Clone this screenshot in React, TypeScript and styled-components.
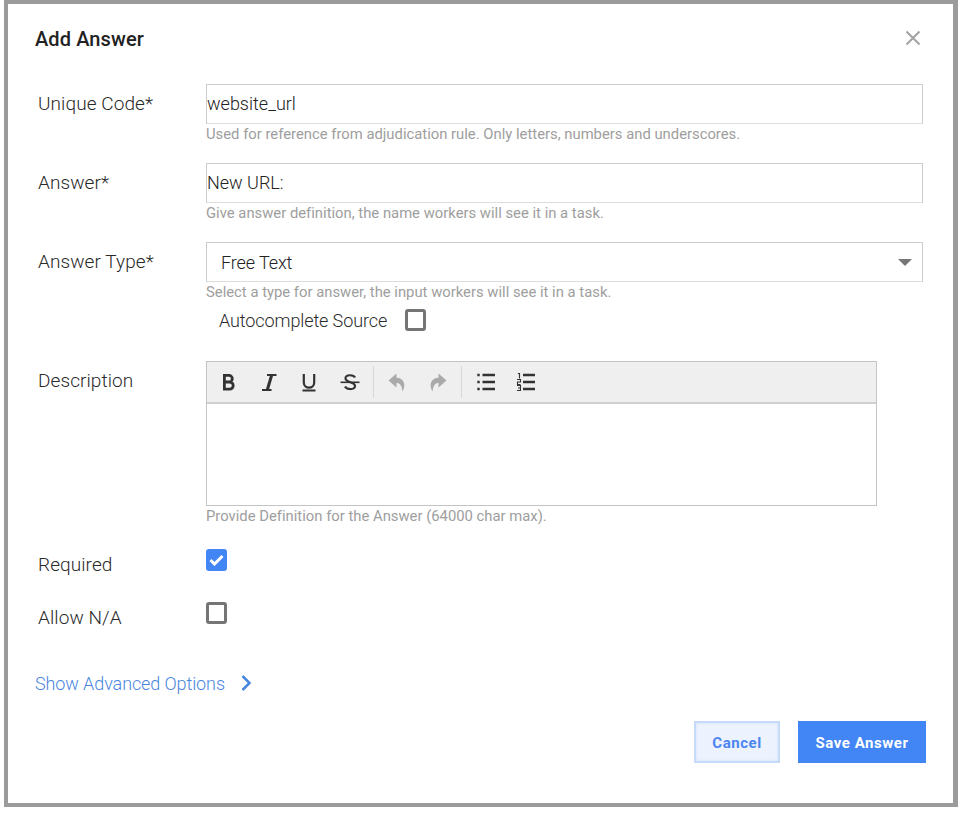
import React from "react";
import styled, { createGlobalStyle } from "styled-components";

const Global = createGlobalStyle`
  html, body { margin: 0; padding: 0; background: #fff; }
  body { font-family: Roboto, "Liberation Sans", sans-serif; color: #333; }
`;
const Backdrop = styled.div`
  box-sizing: border-box; width: 954px; height: 807px; margin-left: 4px;
  background: #9b9b9b; padding: 4px 5px 4px 4px;
`;
const Dialog = styled.div`
  box-sizing: border-box; width: 945px; height: 799px; background: #fff;
  display: flex; flex-direction: column;
`;
const Header = styled.div`
  height: 70px; padding: 0 32px 0 27px; display: flex; align-items: center; justify-content: space-between;
`;
const Title = styled.h2`
  margin: 0; font-size: 20px; font-weight: 500; color: #222; letter-spacing: 0.1px;
`;
const Close = styled.button`
  border: 0; background: none; padding: 0; width: 16px; height: 16px; display: flex; margin-top: -2px;
`;
const Form = styled.div`
  padding: 10px 30px 0; display: flex; flex-direction: column;
`;
const Row = styled.div<{ $h: number }>`
  display: grid; grid-template-columns: 168px 717px; height: ${(p) => p.$h}px;
`;
const Label = styled.label<{ $top?: number }>`
  font-size: 19px; font-weight: 300; line-height: 21px; color: #2a2a2a; padding-top: ${(p) => p.$top ?? 9}px;
  letter-spacing: 0.08px;
`;
const Input = styled.div`
  box-sizing: border-box; height: 40px; border: 1px solid #ccc; border-bottom-color: #ddd; font-size: 18px; font-weight: 300;
  line-height: 38px; color: #222; letter-spacing: 0;
`;
const Select = styled(Input)`
  padding-left: 14px; padding-right: 10px; display: flex; justify-content: space-between; align-items: center;
  line-height: 40px; letter-spacing: -0.1px;
`;
const SelectText = styled.span`
  padding-top: 1px;
`;
const Caret = styled.span`
  width: 0; height: 0; border-left: 7px solid transparent; border-right: 7px solid transparent;
  border-top: 7px solid #777; margin-top: 1px;
`;
const Help = styled.div`
  font-size: 14.8px; font-weight: 400; line-height: 20px; color: #9e9e9e; letter-spacing: 0.01px;
`;
const CheckRow = styled.div`
  display: flex; align-items: center; height: 22px; margin: 7px 0 0 13px; gap: 18px;
  font-size: 18px; font-weight: 300; color: #2a2a2a; letter-spacing: -0.1px;
`;
const Box = styled.span<{ $on?: boolean }>`
  box-sizing: border-box; width: 21px; height: 22px; border-radius: 3px; display: inline-flex;
  align-items: center; justify-content: center;
  border: ${(p) => (p.$on ? "none" : "3px solid #757575")};
  background: ${(p) => (p.$on ? "#4285f4" : "#fff")};
`;
const Editor = styled.div`
  box-sizing: border-box; width: 671px; height: 145px; border: 1px solid #c4c4c4;
`;
const Toolbar = styled.div`
  box-sizing: border-box; height: 42px; background: #efefef; border-bottom: 2px solid #cfcfcf;
  display: flex; align-items: center; padding-left: 1px;
`;
const Tool = styled.span<{ $w?: number }>`
  width: ${(p) => p.$w ?? 40.5}px; height: 24px; display: flex; align-items: center; justify-content: center;
`;
const Divider = styled.span<{ $ml?: number }>`
  width: 1px; height: 32px; background: #d8d8d8; margin: 0 2px 0 ${(p) => p.$ml ?? 2}px;
`;
const Advanced = styled.div`
  padding: 0 0 0 27px; display: flex; align-items: center; gap: 15px; height: 24px; margin-top: -1px;
  font-size: 18px; font-weight: 300; color: #4a86e0; letter-spacing: -0.1px;
`;
const Footer = styled.div`
  display: flex; justify-content: flex-end; gap: 18px; padding-right: 27px; margin-top: 26px;
`;
const Btn = styled.button`
  box-sizing: border-box; height: 42px; font-family: inherit; font-size: 15px; font-weight: 700; letter-spacing: 0.55px;
  padding: 2px 0 0;
`;
const Cancel = styled(Btn)`
  width: 86px; background: #ecf2fe; color: #4d85ef; border: 2px solid #c6daf9; box-shadow: inset 0 0 3px #cfe0fb;
`;
const Save = styled(Btn)`
  width: 128px; background: #4285f4; color: #fff; border: none;
`;

const Ic = ({ c = "#333", children }: { c?: string; children: React.ReactNode }) => (
  <svg width="24" height="24" viewBox="0 0 24 24" fill="none" stroke={c} strokeWidth="2">{children}</svg>
);

export default function App() {
  return (
    <>
      <Global />
      <Backdrop>
        <Dialog>
          <Header>
            <Title>Add Answer</Title>
            <Close aria-label="Close">
              <svg width="16" height="16" viewBox="0 0 16 16" stroke="#a3a3a3" strokeWidth="2"><path d="M1.5 1.5 14.5 14.5M14.5 1.5 1.5 14.5" /></svg>
            </Close>
          </Header>
          <Form>
            <Row $h={79}>
              <Label>Unique Code*</Label>
              <div>
                <Input>website_url</Input>
                <Help>Used for reference from adjudication rule. Only letters, numbers and underscores.</Help>
              </div>
            </Row>
            <Row $h={79}>
              <Label>Answer*</Label>
              <div>
                <Input>New URL:</Input>
                <Help>Give answer definition, the name workers will see it in a task.</Help>
              </div>
            </Row>
            <Row $h={119}>
              <Label>Answer Type*</Label>
              <div>
                <Select><SelectText>Free Text</SelectText><Caret /></Select>
                <Help>Select a type for answer, the input workers will see it in a task.</Help>
                <CheckRow>Autocomplete Source<Box /></CheckRow>
              </div>
            </Row>
            <Row $h={188}>
              <Label>Description</Label>
              <div>
                <Editor>
                  <Toolbar>
                    <Tool><Ic><path strokeWidth="2.8" d="M8.400 5.400v13.800M7 5.400h6a3.300 3.300 0 0 1 0 6.600H8.400m0 0h5.200a3.600 3.600 0 0 1 0 7.200H7" /></Ic></Tool>
                    <Tool><Ic><path strokeWidth="1.800" d="M10 5h9.500M5 20h9.500" /><path strokeWidth="3" d="M14.700 5 10.300 20" /></Ic></Tool>
                    <Tool><Ic><path strokeWidth="2.200" d="M6.800 4v8.500a5.200 5.200 0 0 0 10.400 0V4M5.500 20.500h13" /></Ic></Tool>
                    <Tool><Ic><path strokeWidth="2.200" d="M17 7.500C16 5 7.500 3.700 7.500 8.300c0 4.600 9.500 3.400 9.500 7.700 0 4.400-8.500 3.500-10 .5" /><path strokeWidth="1.600" d="M2.500 12.300h19" /></Ic></Tool>
                    <Divider $ml={3} />
                    <Tool $w={42}><Ic c="#aaa"><path stroke="none" fill="#aaa" d="M11.500 3.500 3.500 10.500 11.500 17.500v-4.500c3.400 0 5.200 2.300 6 8.500 4-6.800 1.500-13.500-6-13.700z" /></Ic></Tool>
                    <Tool $w={39}><Ic c="#aaa"><path stroke="none" fill="#aaa" d="M12.500 3.500 20.500 10.500 12.500 17.500v-4.500c-3.400 0-5.200 2.300-6 8.500-4-6.800-1.500-13.500 6-13.700z" /></Ic></Tool>
                    <Divider $ml={4} />
                    <Tool $w={44}><Ic><path strokeWidth="2.400" d="M8.500 5h12.500M8.500 12h12.500M8.500 19h12.500M3.300 5h2.400M3.300 12h2.400M3.300 19h2.400" /></Ic></Tool>
                    <Tool $w={36}><Ic><path strokeWidth="2.600" d="M9 5h12M9 12h12M9 19h12" /><path strokeWidth="1.100" d="M3.800 3.500h1.700v5M3 9.500h3.500v2.500H3.500v2.500h3M3 15.500h3.500v5H3M4 18h2.500" /></Ic></Tool>
                  </Toolbar>
                </Editor>
                <Help>Provide Definition for the Answer (64000 char max).</Help>
              </div>
            </Row>
            <Row $h={53}>
              <Label $top={5}>Required</Label>
              <div>
                <Box $on>
                  <svg width="15" height="12" viewBox="0 0 15 12" fill="none" stroke="#fff" strokeWidth="3"><path d="M1.500 6 5.500 10 13.500 2" /></svg>
                </Box>
              </div>
            </Row>
            <Row $h={70}>
              <Label $top={5}>Allow N/A</Label>
              <div><Box /></div>
            </Row>
          </Form>
          <Advanced>
            Show Advanced Options
            <svg width="12" height="18" viewBox="0 0 12 18" fill="none" stroke="#4a86e0" strokeWidth="2.500"><path d="M2.500 2 9.500 9 2.500 16" /></svg>
          </Advanced>
          <Footer>
            <Cancel>Cancel</Cancel>
            <Save>Save Answer</Save>
          </Footer>
        </Dialog>
      </Backdrop>
    </>
  );
}
